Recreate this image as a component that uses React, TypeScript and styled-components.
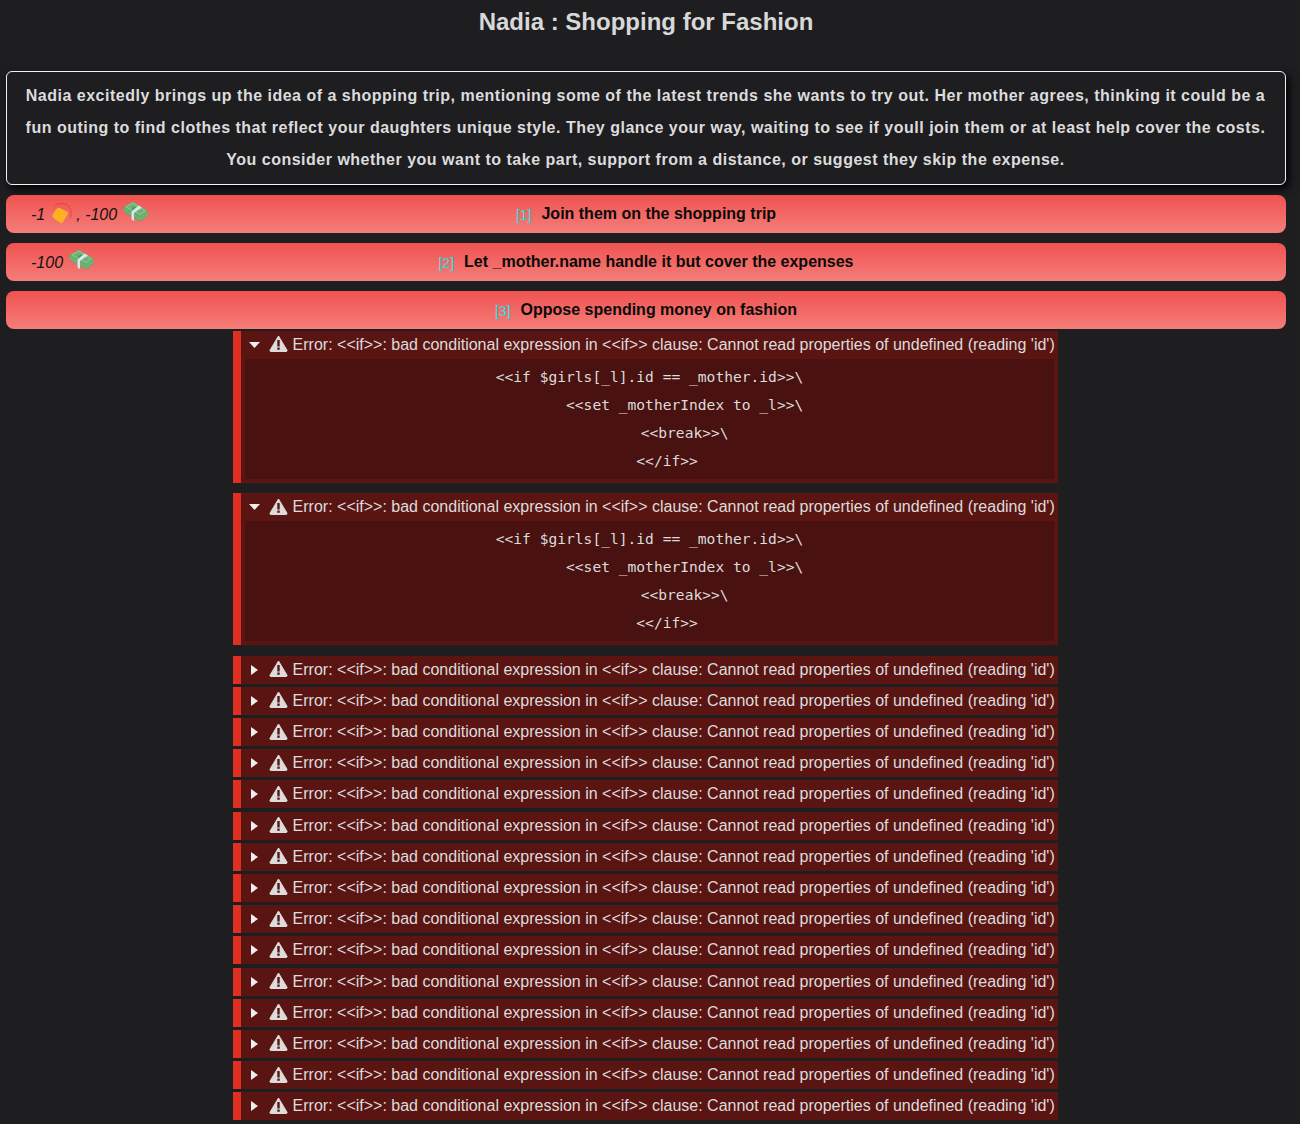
import React from "react";
import styled, { createGlobalStyle } from "styled-components";

const Global = createGlobalStyle`
  html, body { margin: 0; padding: 0; background: #1e1e21; height: 100%; overflow: hidden; }
  body { font-family: "Liberation Sans", Arial, sans-serif; color: #ddd; }
`;

const Page = styled.main`
  width: 1280px;
  margin-left: 6px;
`;

const Title = styled.h1`
  margin: 0 0 27px;
  height: 44px;
  line-height: 44px;
  font-size: 24px;
  font-weight: 700;
  text-align: center;
  color: #d8d8d8;
`;

const Intro = styled.section`
  box-sizing: border-box;
  height: 114px;
  padding: 8px 16px 6px 15px;
  border: 1px solid #f2f2f2;
  border-radius: 6px;
  box-shadow: 3px 4px 8px #000;
  font-size: 16px;
  font-weight: 700;
  line-height: 32px;
  letter-spacing: 0.5px;
  text-align: center;
  color: #dcdcdc;
`;

const Choices = styled.div`
  display: flex;
  flex-direction: column;
  gap: 10px;
  margin-top: 10px;
`;

const Choice = styled.button`
  display: grid;
  grid-template-columns: 1fr auto 1fr;
  align-items: center;
  height: 38px;
  padding: 0 25px;
  border: 0;
  border-radius: 8px;
  background: linear-gradient(to bottom, #ef5350, #f57d79);
  font: 700 16px/38px "Liberation Sans", Arial, sans-serif;
  color: #0a0a0a;
`;

const Cost = styled.span`
  display: flex;
  align-items: center;
  font-weight: 400;
  font-style: italic;
  color: #111;
  white-space: pre;
`;

const Key = styled.span`
  margin-right: 10px;
  font-size: 14px;
  font-weight: 400;
  vertical-align: -1px;
  color: #1fe0e4;
`;

const Errors = styled.div`
  margin-top: 1.9px;
  margin-left: 227px;
  width: 825px;
`;

const ErrorView = styled.details`
  box-sizing: border-box;
  margin-bottom: 3.2px;
  border-left: 8px solid #dd3020;
  background: #5a1513;
  padding: 0 4px;
  &[open] { margin-bottom: 10.4px; padding-bottom: 4px; }
`;

const ErrorTitle = styled.summary`
  display: flex;
  align-items: center;
  height: 28px;
  list-style: none;
  font-size: 16px;
  line-height: 28px;
  white-space: nowrap;
  color: #dcdcdc;
  &::-webkit-details-marker { display: none; }
`;

const CaretBox = styled.span`
  flex: none;
  display: flex;
  justify-content: center;
  width: 11px;
  margin-left: 4px;
  margin-right: 9px;
`;

const WarnIcon = styled.svg`
  flex: none;
  width: 19px;
  height: 17px;
  margin-top: -2px;
  margin-right: 4.6px;
`;

const Source = styled.pre`
  margin: 0;
  padding: 4px 0;
  background: #49110f;
  font-family: "DejaVu Sans Mono", "Liberation Mono", monospace;
  font-size: 14.6px;
  line-height: 28px;
  text-align: center;
  color: #dcdcdc;
`;

const CoinIcon = styled.svg`
  flex: none;
  margin: -2px 4px 0 7px;
`;

const MoneyIcon = styled.svg`
  flex: none;
  margin: -6px 0 0 5.5px;
`;

const Coin = () => (
  <CoinIcon width="20" height="21" viewBox="0 0 20 21">
    <path d="M3.3 3.3 Q4 .7 6 .7 L11.7 .7 Q15 1 16.7 3.3 Q19 6 19.3 10 L18.3 15" fill="none" stroke="#f4431f" strokeWidth="1" />
    <path d="M6 5 Q7 4.5 8 5 L15.5 9 Q16.5 10 16 11 L11 19 Q10 20.5 8.5 20 L1.5 15 Q0 14 .5 12 L4.5 6 Z" fill="#fdb022" />
  </CoinIcon>
);

const Money = () => (
  <MoneyIcon width="25" height="21" viewBox="0 0 25 21">
    <path d="M.7 6 V11 L17 20.5 L24.7 15 V10 Z" fill="#5a9f60" />
    <path d="M.7 7.5 L17 17 L24.7 11.5 M.7 9.5 L17 19 L24.7 13.5" fill="none" stroke="#8ccf8f" strokeWidth=".8" />
    <path d="M.7 6 L10 .7 L24.7 10 L17 15.5 Z" fill="#6fb374" />
    <path d="M3 6 L10 2 L22 10 L17 13.5 Z" fill="none" stroke="#9ad69c" strokeWidth=".6" />
    <ellipse cx="12.5" cy="8" rx="3.6" ry="2.3" fill="#559a5b" />
    <path d="M15.5 4.5 L19 6.6 L11 12 L11 20 L8.5 18.5 L8.5 10.5 Z" fill="#d6e6ea" />
  </MoneyIcon>
);

const Caret = ({ open }: { open: boolean }) => (
  <CaretBox>
    {open ? (
      <svg width="11" height="6" viewBox="0 0 11 6"><path d="M0 0 H11 L5.5 6 Z" fill="#eee" /></svg>
    ) : (
      <svg width="7" height="10" viewBox="0 0 7 10"><path d="M0 0 L7 5 L0 10 Z" fill="#eee" /></svg>
    )}
  </CaretBox>
);

const Warn = () => (
  <WarnIcon viewBox="0 0 19 17">
    <path d="M9.5 1 L18 15.2 Q18.2 16.5 17 16.5 H2 Q.8 16.5 1 15.2 Z" fill="#dcdcdc" stroke="#dcdcdc" strokeLinejoin="round" />
    <rect x="8.3" y="5" width="2.4" height="6.5" fill="#5a1513" />
    <rect x="8.3" y="12.5" width="2.4" height="2.3" fill="#5a1513" />
  </WarnIcon>
);

const source = [
  "<<if $girls[_l].id == _mother.id>>\\",
  "        <<set _motherIndex to _l>>\\",
  "        <<break>>\\",
  "    <</if>>",
].join("\n");
const message = "Error: <<if>>: bad conditional expression in <<if>> clause: Cannot read properties of undefined (reading 'id')";

const Err = ({ open }: { open: boolean }) => (
  <ErrorView open={open}>
    <ErrorTitle>
      <Caret open={open} />
      <Warn />
      {message}
    </ErrorTitle>
    {open && <Source>{source}</Source>}
  </ErrorView>
);

export default function App() {
  return (
    <Page>
      <Global />
      <Title>Nadia : Shopping for Fashion</Title>
      <Intro>
        Nadia excitedly brings up the idea of a shopping trip, mentioning some of the latest trends she wants to try out. Her mother agrees, thinking it could be a fun outing to find clothes that reflect your daughters unique style. They glance your way, waiting to see if youll join them or at least help cover the costs. You consider whether you want to take part, support from a distance, or suggest they skip the expense.
      </Intro>
      <Choices>
        <Choice>
          <Cost>-1<Coin />, -100<Money /></Cost>
          <span><Key>[1]</Key>Join them on the shopping trip</span>
        </Choice>
        <Choice>
          <Cost>-100<Money /></Cost>
          <span><Key>[2]</Key>Let _mother.name handle it but cover the expenses</span>
        </Choice>
        <Choice>
          <Cost />
          <span><Key>[3]</Key>Oppose spending money on fashion</span>
        </Choice>
      </Choices>
      <Errors>
        {Array.from({ length: 17 }, (_, i) => (
          <Err key={i} open={i < 2} />
        ))}
      </Errors>
    </Page>
  );
}
